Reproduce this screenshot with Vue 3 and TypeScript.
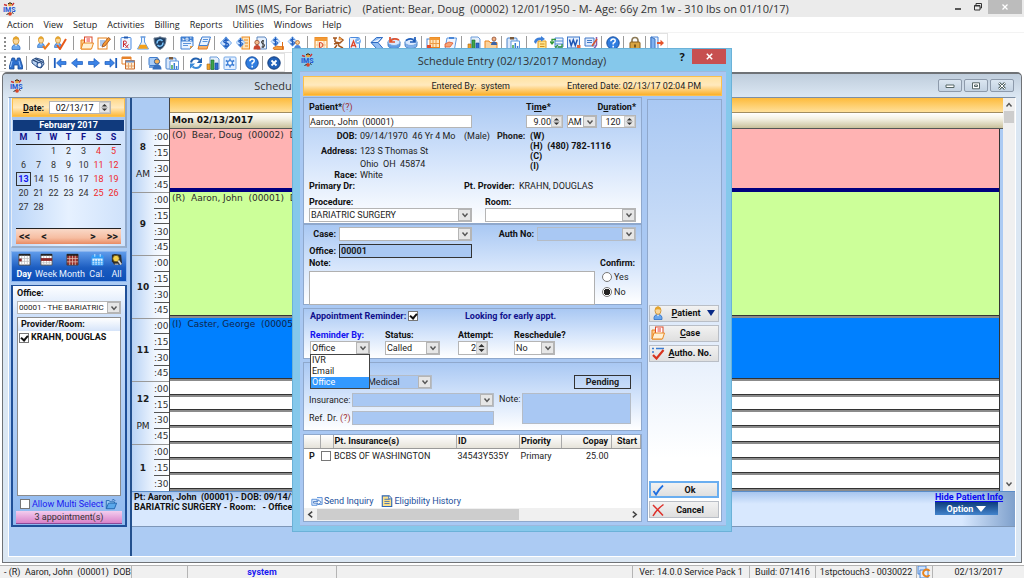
<script setup lang="ts">
import { ref } from 'vue'

type Tool = { icon: string; label: string } | { sep: 's' | 'm' | 'l' }

const t = (icon: string, label: string): Tool => ({ icon, label })
const s: Tool = { sep: 's' }
const m: Tool = { sep: 'm' }
const l: Tool = { sep: 'l' }

const menus = ['Action', 'View', 'Setup', 'Activities', 'Billing', 'Reports', 'Utilities', 'Windows', 'Help']

const mainTools: Tool[] = [
  t('person', 'Patient'), l,
  t('person-edit', 'Check in'), t('person-done', 'Check out'), l,
  t('folder', 'Chart'), t('note-edit', 'Visit note'), s,
  t('rx', 'Prescription'), t('flask', 'Lab'), t('shield', 'Immunization'), l,
  t('doc', 'Document'), t('layers', 'Forms'), s,
  t('dollar', 'Charges'), t('dollar-note', 'Payment'), t('dollar-person', 'Account'),
  t('dollar-hand', 'Collection'), t('dollar-user', 'Billing'), l,
  t('cal-d', 'Schedule'), t('runner', 'Follow up'), t('doc-a', 'Letter'), s,
  t('fold', 'Fax'), t('disc-red', 'Outbox'), t('disc-blue', 'Inbox'), s,
  t('cal-orange', 'Planner'), t('clip-red', 'Tasks'), m,
  t('chart', 'Analysis'), t('folder-user', 'Referral'), s,
  t('clip-chart', 'Report'), l,
  t('doc-swap', 'Exchange'), t('table-swap', 'Transfer'), t('word', 'Word'), t('sign', 'Sign'), s,
  t('help', 'Help'), s,
  t('lock', 'Lock'), s,
  t('exit', 'Exit'),
]

const viewTools: Tool[] = [
  t('binoculars', 'Find'), s,
  t('eye', 'Preview'), s,
  t('first', 'First'), t('prev', 'Previous'), t('next', 'Next'), t('last', 'Last'), t('tiles', 'Windows'), l,
  t('people', 'Patients'), t('clip-chart', 'Report'), m,
  t('refresh', 'Refresh'), t('chart', 'Statistics'), t('gear', 'Settings'), s,
  t('help', 'Help'), s,
  t('close', 'Close'),
]

const weekdays = ['M', 'T', 'W', 'T', 'F', 'S', 'S']
const weeks: (number | null)[][] = [
  [null, null, 1, 2, 3, 4, 5],
  [6, 7, 8, 9, 10, 11, 12],
  [13, 14, 15, 16, 17, 18, 19],
  [20, 21, 22, 23, 24, 25, 26],
  [27, 28, null, null, null, null, null],
]

const views = [
  { label: 'Day', icon: 'v-day' },
  { label: 'Week', icon: 'v-week' },
  { label: 'Month', icon: 'v-month' },
  { label: 'Cal.', icon: 'v-cal' },
  { label: 'All', icon: 'v-all' },
]

const hours = [
  { h: '8', half: 'AM', slots: [':00', ':15', ':30', ':45'] },
  { h: '9', half: '', slots: [':00', ':15', ':30', ':45'] },
  { h: '10', half: '', slots: [':00', ':15', ':30', ':45'] },
  { h: '11', half: '', slots: [':00', ':15', ':30', ':45'] },
  { h: '12', half: 'PM', slots: [':00', ':15', ':30', ':45'] },
  { h: '1', half: '', slots: [':00', ':15', ':30'] },
]

const appointments = [
  { text: '(O)  Bear, Doug  (00002)  DOB', kind: 'pink' },
  { text: '(R)  Aaron, John  (00001)  DOB', kind: 'green' },
  { text: '(I)  Caster, George  (00005)', kind: 'blue' },
]

const reminderOptions = ['IVR', 'Email', 'Office']

const date = ref('02/13/17')
const patient = ref('Aaron, John  (00001)')
const time = ref('9.00')
const duration = ref('120')
const office = ref('00001')
const attempt = ref('2')
const note = ref('')
const insNote = ref('')
const refDr = ref('')
const confirm = ref('No')
const reminder = ref(true)
const reminderBy = ref('Office')
const providerOn = ref(true)
const multi = ref(false)
const authReq = ref(false)
const insRow = ref(false)
</script>

<template>
  <div class="app">
    <svg class="defs" aria-hidden="true">
      <symbol id="i-logo" viewBox="0 0 14 14">
        <path d="M2 2.500l3 1M12 1l-2 2.500" stroke="#c33" stroke-width="1.400" />
        <circle cx="8" cy="2.400" r="1.900" fill="#e8a13a" /><path d="M6 1.800q2-2 4 0" stroke="#222" fill="none" />
        <text x="1" y="9.500" font-size="7" font-weight="700" font-family="Roboto, sans-serif" fill="#1d52d0">IMS</text>
        <circle cx="8" cy="11.800" r="1.900" fill="#d8452a" /><path d="M4.500 13l2-2M10 10.500l1.500 1" stroke="#222" />
      </symbol>
      <symbol id="i-person" viewBox="0 0 14 14">
        <path d="M3 13.500q-.5-5 4-5t4 5z" fill="#6aa7ec" stroke="#2f6fc4" stroke-width=".8" />
        <path d="M5.800 8.500l1.200 2 1.200-2z" fill="#fff" />
        <ellipse cx="7" cy="4.600" rx="3" ry="3.800" fill="#fbd79a" stroke="#c98a25" stroke-width=".8" />
        <path d="M4 4q.5-3.500 3-3.500T10 4Q7 2.500 4 4z" fill="#e5a52d" />
      </symbol>
      <symbol id="i-person-edit" viewBox="0 0 14 14">
        <use href="#i-person" x="-1" width="12" height="12" /><path d="M7 10l2 2.500 4.500-5.500" stroke="#f07a1a" stroke-width="2" fill="none" />
      </symbol>
      <symbol id="i-person-done" viewBox="0 0 14 14">
        <use href="#i-person" x="-1" width="12" height="12" /><path d="M4 9l3 4 6-10" stroke="#e85a1a" stroke-width="2" fill="none" />
      </symbol>
      <symbol id="i-folder" viewBox="0 0 14 14">
        <path d="M1 13V4h3l1 1.500h6V13z" fill="#fbc98a" stroke="#e8831c" /><rect x="4.500" y="1" width="7.500" height="7" fill="#fff" stroke="#d9482b" />
        <path d="M6.500 3h3.500M6.500 5h3.500" stroke="#e33" /><path d="M1 13l2-6h10.500l-2 6z" fill="#fff0d4" stroke="#ea8a22" />
      </symbol>
      <symbol id="i-note-edit" viewBox="0 0 14 14">
        <rect x="1" y="2" width="9" height="11" fill="#fff" stroke="#e8831c" /><path d="M3 5h5M3 7h4M3 9h3" stroke="#5b94dc" />
        <path d="M5 11l1-3 5.500-6.500 2 1.500L8 10z" fill="#f49a34" stroke="#96461a" stroke-width=".8" />
      </symbol>
      <symbol id="i-rx" viewBox="0 0 14 14">
        <rect x="2" y="1.500" width="10" height="12" rx="1" fill="#eef5ff" stroke="#4a8ae0" /><path d="M5 1.500h4" stroke="#235bb0" stroke-width="2" />
        <path d="M4.500 11V5h2.200q1.500 1.500 0 3H5l4.500 4M9.500 8.500l-3 3.500" stroke="#cc2d33" fill="none" />
      </symbol>
      <symbol id="i-flask" viewBox="0 0 14 14">
        <path d="M5.500 1.500V6L1.500 13h11L8.500 6V1.500" fill="#e8f2ff" stroke="#5d9ae4" /><path d="M4 8.800h6L12 12.700H2z" fill="#f5a21b" /><path d="M4.500 1h5" stroke="#4a86d4" stroke-width="1.300" />
      </symbol>
      <symbol id="i-shield" viewBox="0 0 14 14">
        <path d="M7 .8q3 1.500 6 1.200 0 9-6 11.500Q1 11 1 2q3 .3 6-1.200z" fill="#1f3e62" stroke="#6b7c90" />
        <path d="M4.200 7.500A3 3 0 0 1 9.500 5M9.800 6.500A3 3 0 0 1 4.500 9" stroke="#7cc7ff" stroke-width="1.400" fill="none" />
      </symbol>
      <symbol id="i-doc" viewBox="0 0 14 14">
        <path d="M1 1h12v9l-3 3H1z" fill="#eaf3ff" stroke="#3f7fd2" /><path d="M1 1h12v4.500H1z" fill="#3f7fd2" />
        <path d="M3 2v2.500M3 3.500h1.500M6 2.200h2v2H6zM10 2h1.500M10 4.500h1.500" stroke="#fff" stroke-width=".8" fill="none" /><path d="M3 7.500h8M3 9.500h5" stroke="#5b94dc" /><path d="M10 13v-3h3z" fill="#f0a03c" />
      </symbol>
      <symbol id="i-layers" viewBox="0 0 14 14">
        <path d="M4 3h9l-3 10H1z" fill="#f9b26a" stroke="#e37a22" /><path d="M5 1h8.500L10.500 9.500H2z" fill="#eaf3ff" stroke="#3f7fd2" /><path d="M6 3.500h5M5.500 5.500h5" stroke="#5b94dc" />
      </symbol>
      <symbol id="i-dollar" viewBox="0 0 14 14">
        <path d="M7 .8l5.500 6.200L7 13.200 1.500 7z" fill="#cfe4ff" stroke="#6fa8ea" />
        <path d="M9.500 4.600Q7 3 5.300 4.500T7 7q3.500.8 2 2.700T4.500 9.500M7 1.500v11" stroke="#1c5bbd" stroke-width="1.400" fill="none" />
      </symbol>
      <symbol id="i-dollar-note" viewBox="0 0 14 14">
        <rect x="6" y="1" width="7.500" height="12" fill="#fde3b8" stroke="#ec8a21" /><path d="M8 4h4M9 7h3M9 10h3" stroke="#ec8a21" /><use href="#i-dollar" x="-1" y="1" width="11" height="11" />
      </symbol>
      <symbol id="i-dollar-person" viewBox="0 0 14 14">
        <path d="M4 1h8l1.500 2v10H4z" fill="#e6f0fd" stroke="#5d86bd" /><path d="M11 5Q8.500 4 8.500 6t2 2 .3 3H8.500M10 4v8" stroke="#333" stroke-width="1" fill="none" />
        <circle cx="4" cy="6.500" r="2.200" fill="#f4b98a" stroke="#8a3b22" stroke-width=".7" /><path d="M.5 13.500q0-4.500 3.500-4.500t3.500 4.500z" fill="#c8452f" />
      </symbol>
      <symbol id="i-dollar-hand" viewBox="0 0 14 14">
        <use href="#i-dollar" x="0" y="0" width="11" height="11" /><path d="M3 12q4-3 6-1.500h4.500v3H4z" fill="#f6a13c" stroke="#db6b16" stroke-width=".8" /><path d="M12.500 6v7" stroke="#db6b16" />
      </symbol>
      <symbol id="i-dollar-user" viewBox="0 0 14 14">
        <use href="#i-dollar" x="0" y="0" width="11" height="11" /><circle cx="10.500" cy="6.500" r="2" fill="#f8cb90" stroke="#ab5b1c" stroke-width=".7" /><path d="M7 13.500q0-4.500 3.500-4.500t3.500 4.500z" fill="#4a89dc" />
      </symbol>
      <symbol id="i-cal-d" viewBox="0 0 14 14">
        <rect x="1" y="1.500" width="12" height="12" fill="#fff5e2" stroke="#e8831c" /><path d="M1 1.500h12V5H1z" fill="#f39a35" /><path d="M4 5v8M10 5v8M1 9h12" stroke="#f5c48a" /><path d="M5.500 6.500v5q3.500 0 3.500-2.500T5.500 6.500z" stroke="#d93a22" fill="none" />
      </symbol>
      <symbol id="i-runner" viewBox="0 0 14 14">
        <path d="M2 2h4M4 2v4M8 1l4 3-3 3-5-1M3 8l4-1 1 3 4 2M6 9l-3 4" stroke="#a4561d" stroke-width="1.500" fill="none" /><circle cx="9" cy="3" r="1.600" fill="#f2a04a" />
      </symbol>
      <symbol id="i-doc-a" viewBox="0 0 14 14">
        <rect x="1.500" y="1.500" width="10" height="12" rx="1" fill="#eaf3ff" stroke="#4b8ade" /><path d="M3 11.500l2.500-6.500L8 11.500M4 9.500h3" stroke="#e0452a" stroke-width="1.300" fill="none" /><circle cx="10" cy="5" r="3" fill="#7cb0ee" /><path d="M9 5l1 1 2-2.500" stroke="#fff" fill="none" />
      </symbol>
      <symbol id="i-fold" viewBox="0 0 14 14">
        <path d="M12.500 1.500H6.500L1 6.500l6 6.500h6.500L8 6.500z" fill="#8fbcf2" stroke="#2d6ac2" /><path d="M1 6.500h7l4.500-5" fill="#e3efff" stroke="#2d6ac2" />
      </symbol>
      <symbol id="i-disc-red" viewBox="0 0 14 14">
        <path d="M1 6v3q0 3.500 6 3.500T13 9V6z" fill="#5f9de6" stroke="#4a80c4" /><ellipse cx="7" cy="6" rx="6" ry="3.500" fill="#d9e9ff" stroke="#7aa9de" /><path d="M3 1v5h5M3.500 5.500Q6 1 12 4" stroke="#e2522d" stroke-width="1.700" fill="none" />
      </symbol>
      <symbol id="i-disc-blue" viewBox="0 0 14 14">
        <path d="M1 6v3q0 3.500 6 3.500T13 9V6z" fill="#7fb0ec" stroke="#4a80c4" /><ellipse cx="7" cy="6" rx="6" ry="3.500" fill="#d9e9ff" stroke="#7aa9de" /><path d="M11 1v5H6M10.500 5.500Q8 1 2 4.500" stroke="#1e5bb8" stroke-width="1.700" fill="none" />
      </symbol>
      <symbol id="i-cal-orange" viewBox="0 0 14 14">
        <rect x="1" y="3" width="9" height="9" fill="#fff" stroke="#4a86d6" /><rect x="4" y="1.500" width="9.500" height="10" fill="#ffe6bd" stroke="#e8831c" /><path d="M4 1.500h9.500V4H4z" fill="#f39a35" /><path d="M7 4v7M10 4v7M4 7.500h9" stroke="#eb9b45" /><path d="M1 9h4v4H1z" fill="#e34b2c" />
      </symbol>
      <symbol id="i-clip-red" viewBox="0 0 14 14">
        <path d="M4 2h9.500l-2 11H2z" fill="#eef5ff" stroke="#5e97de" /><path d="M6 1h5v2H6z" fill="#4a86d6" /><path d="M2 8l4-2 4 1-3 4H2z" fill="#f7a476" stroke="#e0562c" stroke-width=".8" />
      </symbol>
      <symbol id="i-chart" viewBox="0 0 14 14">
        <path d="M4 1h7l2 2v10H4z" fill="#e6f0fd" stroke="#6b9bd8" /><path d="M1 8h3v5.500H1z" fill="#f1a32b" stroke="#a66412" stroke-width=".6" /><path d="M5 4h3v9.500H5z" fill="#3da44a" stroke="#1d6a2a" stroke-width=".6" /><path d="M9 7h3v6.500H9z" fill="#2e6fd0" stroke="#164493" stroke-width=".6" />
      </symbol>
      <symbol id="i-folder-user" viewBox="0 0 14 14">
        <path d="M1 13V5h4l1 1.500h7V13z" fill="#fbd29b" stroke="#e8831c" /><circle cx="10" cy="3" r="2" fill="#f2b182" stroke="#7e3a20" stroke-width=".7" /><path d="M7 9q0-3.500 3-3.500T13 9z" fill="#3b64a8" />
      </symbol>
      <symbol id="i-clip-chart" viewBox="0 0 14 14">
        <rect x="1" y="2" width="10" height="11" rx="1" fill="#d9e8fc" stroke="#4b82c8" /><path d="M4 1h4v2.500H4z" fill="#7a5a3a" /><path d="M5 5h8.500v8.500H5z" fill="#fff" stroke="#5f97dd" /><path d="M9.300 13V7M11.600 13v-3" stroke="#3b7ed2" stroke-width="1.500" /><path d="M7 13v-4" stroke="#3da44a" stroke-width="1.500" />
      </symbol>
      <symbol id="i-doc-swap" viewBox="0 0 14 14">
        <path d="M5 5h8v8.500H5z" fill="#ffe58c" stroke="#e39a22" /><path d="M7 8h4.500M7 10.500h4.500" stroke="#d58c1e" /><path d="M1 6q1-5 7-4.500V0l4 3-4 2.500V4Q4 3.500 3 8z" fill="#3d7fd8" />
      </symbol>
      <symbol id="i-table-swap" viewBox="0 0 14 14">
        <path d="M5 2h8v9H5z" fill="#edf4ff" stroke="#4a86d6" /><path d="M5 5h8M5 8h8" stroke="#4a86d6" /><path d="M6 3.500H2V7M0 5.500L2 8l2-2.500M8 11h4V8M8 9l-2.500 2L8 13" stroke="#32983c" stroke-width="1.300" fill="none" />
      </symbol>
      <symbol id="i-word" viewBox="0 0 14 14">
        <rect x=".5" y="1" width="12" height="11" fill="#e5f0ff" stroke="#3f78c9" /><path d="M2.500 3.500l1.700 6L6.300 4l2 5.500 2-6" stroke="#1d55b4" stroke-width="1.500" fill="none" /><path d="M10 9h3.500v4H10z" fill="#e2653a" />
      </symbol>
      <symbol id="i-sign" viewBox="0 0 14 14">
        <path d="M1 2h9v8H1z" fill="#dceaff" stroke="#4379c6" /><path d="M3 4.500h5M3 6.500h5" stroke="#4379c6" /><path d="M12.500 1v8l-3 4.500H4" stroke="#8b5aa8" stroke-width="1.500" fill="none" /><path d="M8 10l5-7" stroke="#d8532e" stroke-width="1.500" />
      </symbol>
      <symbol id="i-help" viewBox="0 0 14 14">
        <circle cx="7" cy="7" r="6.200" fill="#2f7de0" stroke="#1b4f9e" /><path d="M4.800 5.300Q5 3 7.200 3t2 2.200Q9 6.500 7.200 7.200V8.500M7.200 9.800v1.600" stroke="#fff" stroke-width="1.500" fill="none" />
      </symbol>
      <symbol id="i-lock" viewBox="0 0 14 14">
        <path d="M4 7V4.500Q4 1.500 7 1.500t3 3V7" stroke="#8c7a56" stroke-width="1.600" fill="none" /><rect x="2" y="6" width="10" height="7.500" rx="1" fill="#d9a441" stroke="#8a5f1a" /><path d="M7 8.500v3" stroke="#5a3c0c" stroke-width="1.500" />
      </symbol>
      <symbol id="i-exit" viewBox="0 0 14 14">
        <path d="M1 1h7v12H1z" fill="#e6f0ff" stroke="#4b86d8" /><path d="M1 1l4 2v10.500L1 13z" fill="#7fb1f0" stroke="#3a72c0" /><path d="M7 7h4" stroke="#e5532a" stroke-width="2" /><path d="M10.500 3.800L14 7l-3.500 3.200z" fill="#e5532a" />
      </symbol>
      <symbol id="i-binoculars" viewBox="0 0 14 14">
        <path d="M3 2h2.500l1 3h1l1-3H11l2.500 8v3H9V9H5v4H.5v-3z" fill="#2d6fce" stroke="#174a96" stroke-width=".8" /><path d="M3 5l-1.500 6M10 5l1.500 6" stroke="#9cc6ff" />
      </symbol>
      <symbol id="i-eye" viewBox="0 0 14 14">
        <path d="M1 4l4-2 7 2 1 4-3 4-4-1-5-4z" fill="#b9d3f4" stroke="#2b4f86" /><path d="M2 4l8 4M4 2.500l8 4" stroke="#23406e" stroke-width="1.300" /><circle cx="8.500" cy="9" r="2.500" fill="#eef5ff" stroke="#30558f" stroke-width="1.200" />
      </symbol>
      <symbol id="i-prev" viewBox="0 0 14 14"><path d="M1.500 7L7 2.500v3h5.500v3H7v3z" fill="#3b83e6" stroke="#1d5dbd" stroke-width=".7" /></symbol>
      <symbol id="i-next" viewBox="0 0 14 14"><path d="M12.500 7L7 2.500v3H1.500v3H7v3z" fill="#3b83e6" stroke="#1d5dbd" stroke-width=".7" /></symbol>
      <symbol id="i-first" viewBox="0 0 14 14"><path d="M1.800 2v10" stroke="#1d5dbd" stroke-width="1.800" /><path d="M3.500 7L8 2.800v2.700h5v3H8v2.700z" fill="#3b83e6" stroke="#1d5dbd" stroke-width=".7" /></symbol>
      <symbol id="i-last" viewBox="0 0 14 14"><path d="M12.200 2v10" stroke="#1d5dbd" stroke-width="1.800" /><path d="M10.500 7L6 2.800v2.700H1v3h5v2.700z" fill="#3b83e6" stroke="#1d5dbd" stroke-width=".7" /></symbol>
      <symbol id="i-tiles" viewBox="0 0 14 14">
        <path d="M1 1h9v7H1z" fill="#fff" stroke="#e68128" /><path d="M1 2h9" stroke="#e68128" stroke-width="2" /><path d="M4.500 4.500h9v8.500h-9z" fill="#fde9cf" stroke="#c96a2a" /><path d="M4.500 5.500h9" stroke="#6d8fbf" stroke-width="2" /><path d="M7.500 7v6M10.500 7v6M5 10h8" stroke="#e8a46b" />
      </symbol>
      <symbol id="i-people" viewBox="0 0 14 14">
        <rect x="1" y="1.500" width="9" height="8" rx="1" fill="#a9cdf8" stroke="#3f7ccc" /><circle cx="9" cy="5.500" r="2.600" fill="#f3b25a" stroke="#2e5c9c" /><path d="M4.500 13.500q0-5 4.500-5t4.500 5z" fill="#3670bf" /><path d="M1 11h4" stroke="#3f7ccc" stroke-width="1.500" />
      </symbol>
      <symbol id="i-refresh" viewBox="0 0 14 14">
        <path d="M2 6.500Q3 2.500 7 2.500q2 0 3.500 1.500" stroke="#1f5fae" stroke-width="2.200" fill="none" /><path d="M13 1.500V7H7.800z" fill="#1f5fae" /><path d="M12 8q-1 4-5 4-2 0-3.500-1.500" stroke="#3a8ad8" stroke-width="2.200" fill="none" /><path d="M1 12.800V7.500h5.200z" fill="#3a8ad8" />
      </symbol>
      <symbol id="i-gear" viewBox="0 0 14 14">
        <rect x="1" y="1" width="12" height="12.500" rx="1" fill="#e3efff" stroke="#77a9e6" /><path d="M7 2.500v9M2.800 4.500l8.400 5M2.800 9.500l8.400-5" stroke="#3c7ed6" stroke-width="1.500" /><circle cx="7" cy="7" r="2.400" fill="#fff" stroke="#3c7ed6" stroke-width="1.200" />
      </symbol>
      <symbol id="i-close" viewBox="0 0 14 14">
        <circle cx="7" cy="7" r="6.200" fill="#2060b8" stroke="#143c78" /><path d="M4.500 4.500l5 5M9.500 4.500l-5 5" stroke="#fff" stroke-width="1.800" />
      </symbol>
      <symbol id="i-v-day" viewBox="0 0 14 14">
        <path d="M1 1.500h12v11.500H1z" fill="#fff" stroke="#444" /><path d="M1 2h12" stroke="#222" stroke-width="2" /><path d="M4 3v10M7 3v10M10 3v10M1 6h12M1 9h12" stroke="#bbb" stroke-width=".8" /><path d="M1 6h3v3H1z" fill="#8a2525" />
      </symbol>
      <symbol id="i-v-week" viewBox="0 0 14 14">
        <path d="M1 1.500h12v11.500H1z" fill="#fff" stroke="#555" /><path d="M1 2h12" stroke="#222" stroke-width="2" /><path d="M4 3v10M7 3v10M10 3v10M1 10.500h12" stroke="#bbb" stroke-width=".8" /><path d="M1 5.500h12v3H1z" fill="#8a2525" />
      </symbol>
      <symbol id="i-v-month" viewBox="0 0 14 14">
        <path d="M1 1.500h12v11.500H1z" fill="#9a2f2a" stroke="#444" /><path d="M1 2h12" stroke="#222" stroke-width="2" /><path d="M4 3v10M7 3v10M10 3v10M1 6h12M1 9.500h12" stroke="#e2c0b4" stroke-width=".8" />
      </symbol>
      <symbol id="i-v-cal" viewBox="0 0 14 14">
        <path d="M1 3h12v10H1z" fill="#e6f3ff" stroke="#2e9bf5" /><path d="M1 4.500h12" stroke="#2e9bf5" stroke-width="3" /><path d="M4 1v3M10 1v3" stroke="#9cd2ff" stroke-width="1.500" /><path d="M4 7v6M7 7v6M10 7v6M1 9h12M1 11h12" stroke="#2e9bf5" stroke-width=".8" />
      </symbol>
      <symbol id="i-v-all" viewBox="0 0 14 14">
        <path d="M2 2l3-1 7 1 1 10-8 1-3-4z" fill="#2b2b2b" /><circle cx="6.500" cy="6" r="3.500" fill="#f1cf4c" stroke="#5c4a12" stroke-width=".8" /><path d="M9 8l3 4.500" stroke="#d9d9d9" stroke-width="2" /><path d="M5 12h4" stroke="#e8e8e8" />
      </symbol>
      <symbol id="i-autho" viewBox="0 0 14 14">
        <path d="M1 2.500h2M5 2.500h8M1 6h2" stroke="#3b7ed2" stroke-width="1.500" /><path d="M2 9l3.500 3.500L12.500 4" stroke="#d8341f" stroke-width="2.200" fill="none" />
      </symbol>
      <symbol id="i-ok" viewBox="0 0 14 14"><path d="M2.500 8L5 11.500Q8 6 12 2.500" stroke="#1f6fe0" stroke-width="1.800" fill="none" /></symbol>
      <symbol id="i-cancel" viewBox="0 0 14 14"><path d="M2 2q4 4 10 10.500M12.500 1.500Q6 6 2 13" stroke="#dd2f2a" stroke-width="1.500" fill="none" /></symbol>
      <symbol id="i-send" viewBox="0 0 14 14">
        <path d="M1 5h6v7H1zM7 3h6v8H9" fill="#e6f0ff" stroke="#4a86d6" /><path d="M3 7.500h5V5.500l4 3-4 3v-2H3z" fill="#fff" stroke="#3a72c0" />
      </symbol>
      <symbol id="i-history" viewBox="0 0 14 14">
        <path d="M1.500 1h8l3 3v9.500h-11z" fill="#ffe289" stroke="#2f66b5" stroke-width="1.300" /><path d="M4 5h6M4 7.500h6M4 10h6" stroke="#2f66b5" /><path d="M9 1v3.500h3.500" fill="#fff" stroke="#2f66b5" />
      </symbol>
      <symbol id="i-open" viewBox="0 0 14 14">
        <path d="M1.500 12.500V3h3.500l1 1.500h5V6" fill="#9fd0f8" stroke="#1a5fa8" /><path d="M1.500 12.500l2.500-6.500h9.500L11 12.500z" fill="#5aa7ea" stroke="#1a5fa8" /><path d="M8 2.500q3-2 4 1" stroke="#1a5fa8" fill="none" />
      </symbol>
      <symbol id="i-sync" viewBox="0 0 14 14">
        <path d="M1 1h8v8H1z" fill="#cfe2fb" stroke="#4a86d6" /><path d="M3 5h8v8H3z" fill="#e4efff" stroke="#4a86d6" /><path d="M12.500 6a3.500 3.500 0 1 0 0 4" stroke="#e8831c" stroke-width="2" fill="none" />
      </symbol>
      <symbol id="i-chev" viewBox="0 0 8 8"><path d="M1.500 2.500L4 5.500l2.500-3" stroke="#555" stroke-width="1.400" fill="none" /></symbol>
      <symbol id="i-spin" viewBox="0 0 8 10"><path d="M1 4l3-3 3 3zM1 6l3 3 3-3z" fill="#333" /><path d="M0 5h8" stroke="#aaa" stroke-width=".6" /></symbol>
    </svg>

    <header class="titlebar">
      <svg class="ic logo"><use href="#i-logo" /></svg>
      <h1>IMS (IMS, For Bariatric)&nbsp;&nbsp;&nbsp; (Patient: Bear, Doug&nbsp; (00002) 12/01/1950 - M- Age: 66y 2m 1w - 310 lbs on 01/10/17)</h1>
      <div class="winbtns">
        <button aria-label="Minimize"><svg viewBox="0 0 10 10"><path d="M2 7h6" stroke="#333" stroke-width="1.600" /></svg></button>
        <button aria-label="Restore"><svg viewBox="0 0 10 10"><path d="M1.500 3.500h5.500V8H1.500zM3 3.500v-2h5.500V6H7M1.500 4h5.500" stroke="#333" fill="none" /></svg></button>
        <button class="x" aria-label="Close"><svg viewBox="0 0 10 10"><path d="M2.500 2.500l5 5M7.500 2.500l-5 5" stroke="#fff" stroke-width="1.300" /></svg></button>
      </div>
    </header>

    <nav class="menubar">
      <button v-for="item in menus" :key="item">{{ item }}</button>
    </nav>

    <div class="toolrow">
      <div class="toolbar">
        <span class="grip"></span>
        <template v-for="(tool, i) in mainTools" :key="i">
          <button v-if="'icon' in tool" class="tool" :aria-label="tool.label"><svg class="ic"><use :href="'#i-' + tool.icon" /></svg></button>
          <span v-else class="sep" :class="tool.sep"></span>
        </template>
      </div>
    </div>
    <div class="toolrow second">
      <div class="toolbar">
        <span class="grip"></span>
        <template v-for="(tool, i) in viewTools" :key="i">
          <button v-if="'icon' in tool" class="tool" :aria-label="tool.label"><svg class="ic"><use :href="'#i-' + tool.icon" /></svg></button>
          <span v-else class="sep" :class="tool.sep"></span>
        </template>
      </div>
    </div>

    <main class="mdi">
      <div class="childtitle">
        <svg class="ic"><use href="#i-logo" /></svg>
        <h2>Schedule</h2>
        <div class="childbtns">
          <button aria-label="Minimize"><svg viewBox="0 0 12 8"><path d="M2 3h8v2.500H2z" fill="#fff" stroke="#566" /></svg></button>
          <button aria-label="Maximize"><svg viewBox="0 0 12 8"><path d="M2.500.8h7v6h-7zM4.500 3h3v1.500h-3z" fill="#fff" stroke="#566" /></svg></button>
          <button aria-label="Close"><svg viewBox="0 0 12 8"><path d="M3 1l6 6M9 1L3 7" stroke="#566" stroke-width="2.600" /><path d="M3 1l6 6M9 1L3 7" stroke="#fff" /></svg></button>
        </div>
      </div>

      <div class="workspace">
        <aside class="side">
          <div class="calbox">
            <div class="datebar">
              <label for="date"><u>D</u>ate:</label>
              <span class="spin"><input id="date" v-model="date" type="text" /><svg class="spinner"><use href="#i-spin" /></svg></span>
            </div>
            <div class="cal">
              <div class="month">February 2017</div>
              <table>
                <thead><tr><th v-for="(d, i) in weekdays" :key="i">{{ d }}</th></tr></thead>
                <tbody>
                  <tr v-for="(w, i) in weeks" :key="i">
                    <td v-for="(d, j) in w" :key="j" :class="{ we: j > 4, today: d === 13 }">{{ d ?? '' }}</td>
                  </tr>
                </tbody>
              </table>
              <div class="calnav">
                <button>&lt;&lt;</button><button>&lt;</button><span></span><button>&gt;</button><button>&gt;&gt;</button>
              </div>
            </div>
          </div>

          <div class="views">
            <button v-for="(v, i) in views" :key="v.label" :class="{ on: i === 0 }">
              <svg class="ic"><use :href="'#i-' + v.icon" /></svg>{{ v.label }}
            </button>
          </div>

          <div class="office">
            <label class="b" for="off">Office:</label>
            <span class="sel"><select id="off"><option>00001 - THE BARIATRIC</option></select><i><svg><use href="#i-chev" /></svg></i></span>
            <div class="provlist">
              <div class="provhead">Provider/Room:</div>
              <label class="prov"><input v-model="providerOn" type="checkbox" />KRAHN, DOUGLAS</label>
            </div>
            <label class="multi"><input v-model="multi" type="checkbox" />Allow Multi Select<svg class="ic"><use href="#i-open" /></svg></label>
            <div class="count">3 appointment(s)</div>
          </div>
        </aside>

        <section class="sched">
          <div class="schedmain">
            <div class="timecol">
              <div class="corner"></div>
              <div v-for="h in hours" :key="h.h" class="hour" :style="{ flexGrow: h.slots.length }">
                <div class="hnum"><b>{{ h.h }}</b><b v-if="h.half" class="half">{{ h.half }}</b></div>
                <div class="slots"><span v-for="q in h.slots" :key="q">{{ q }}</span></div>
              </div>
            </div>
            <div class="daycol">
              <div class="dayorange"></div>
              <div class="dayhead">Mon 02/13/2017</div>
              <div class="grid">
                <div v-for="a in appointments" :key="a.kind" class="appt" :class="a.kind">{{ a.text }}</div>
                <div v-for="n in 7" :key="n" class="free"></div>
              </div>
            </div>
            <div class="vscroll">
              <svg viewBox="0 0 8 8"><path d="M1.500 5.500L4 2.500l2.500 3" stroke="#555" stroke-width="1.400" fill="none" /></svg>
              <span class="thumb"></span>
              <svg><use href="#i-chev" /></svg>
            </div>
          </div>
          <div class="info">
            <p>Pt: Aaron, John&nbsp; (00001) - DOB: 09/14/1970<br />BARIATRIC SURGERY - Room:&nbsp;&nbsp; - Office</p>
            <div class="infor">
              <a href="#">Hide Patient Info</a>
              <button>Option<svg viewBox="0 0 10 6"><path d="M0 0h10L5 6z" fill="#fff" /></svg></button>
            </div>
          </div>
        </section>
      </div>
    </main>

    <footer class="status">
      <span class="s1">- (R)&nbsp; Aaron, John&nbsp; (00001)&nbsp; DOB</span>
      <span class="s2"></span>
      <span class="s3">system</span>
      <span class="s4"></span>
      <span class="s5">Ver: 14.0.0 Service Pack 1</span>
      <span class="s6">Build: 071416</span>
      <span class="s7">1stpctouch3 - 0030022</span>
      <span class="s8"><svg class="ic"><use href="#i-sync" /></svg></span>
      <span class="s9">02/13/2017</span>
    </footer>

    <div class="dialog" role="dialog" aria-labelledby="dlgtitle">
      <div class="dlgtitle">
        <svg class="ic"><use href="#i-logo" /></svg>
        <h2 id="dlgtitle">Schedule Entry (02/13/2017 Monday)</h2>
        <button class="q">?</button>
        <button class="dx" aria-label="Close"><svg viewBox="0 0 10 10"><path d="M2 2l6 6M8 2L2 8" stroke="#fff" stroke-width="1.700" /></svg></button>
      </div>
      <div class="dlgbody">
        <div class="entered"><span>Entered By:&nbsp; system</span><span>Entered Date: 02/13/17 02:04 PM</span></div>
        <div class="cols">
          <form class="form" @submit.prevent>
            <section class="box patient">
              <div class="two">
                <div class="field grow">
                  <label class="b" for="pt">Patient*<span class="hint">(?)</span></label>
                  <input id="pt" v-model="patient" type="text" />
                </div>
                <div class="times">
                  <div class="field tm"><label class="b" for="tm">Ti<u>m</u>e*</label>
                    <span class="spin"><input id="tm" v-model="time" class="r" type="text" /><svg class="spinner"><use href="#i-spin" /></svg></span></div>
                  <div class="field ap"><span class="sel"><select aria-label="AM or PM"><option>AM</option></select><i><svg><use href="#i-chev" /></svg></i></span></div>
                  <div class="field du"><label class="b" for="du">D<u>u</u>ration*</label>
                    <span class="spin"><input id="du" v-model="duration" class="c" type="text" /><svg class="spinner"><use href="#i-spin" /></svg></span></div>
                </div>
              </div>
              <div class="details">
                <dl>
                  <dt>DOB:</dt><dd>09/14/1970&nbsp; 46 Yr 4 Mo</dd>
                  <dt>Address:</dt><dd>123 S Thomas St</dd>
                  <dt></dt><dd class="city">Ohio&nbsp; OH&nbsp; 45874</dd>
                  <dt>Race:</dt><dd>White</dd>
                </dl>
                <span class="sex">(Male)</span>
                <b class="ph">Phone:</b>
                <ul class="phones"><li>(W)</li><li>(H)&nbsp; (480) 782-1116</li><li>(C)</li><li>(I)</li></ul>
              </div>
              <div class="drs"><b>Primary Dr:</b><span><b>Pt. Provider:</b>&nbsp; KRAHN, DOUGLAS</span></div>
              <div class="two">
                <div class="field"><label class="b" for="proc">Procedure:</label>
                  <span class="sel"><select id="proc"><option>BARIATRIC SURGERY</option></select><i><svg><use href="#i-chev" /></svg></i></span></div>
                <div class="field"><label class="b" for="room">Room:</label>
                  <span class="sel"><select id="room"><option></option></select><i><svg><use href="#i-chev" /></svg></i></span></div>
              </div>
            </section>

            <section class="box case">
              <div class="caserow">
                <label class="b" for="case">Case:</label>
                <span class="sel"><select id="case"><option></option></select><i><svg><use href="#i-chev" /></svg></i></span>
                <label class="b auth" for="auth">Auth No:</label>
                <span class="sel off"><select id="auth"><option></option></select><i><svg><use href="#i-chev" /></svg></i></span>
                <label class="b" for="office">Office:</label>
                <input id="office" v-model="office" class="officein" type="text" />
              </div>
              <div class="noterow">
                <div class="field"><label class="b" for="note">Note:</label><textarea id="note" v-model="note"></textarea></div>
                <fieldset class="confirm">
                  <legend>Confirm:</legend>
                  <label><input v-model="confirm" type="radio" name="confirm" value="Yes" />Yes</label>
                  <label><input v-model="confirm" type="radio" name="confirm" value="No" />No</label>
                </fieldset>
              </div>
            </section>

            <section class="box remind">
              <div class="remtop"><label>Appointment Reminder:<input v-model="reminder" type="checkbox" /></label><span>Looking for early appt.</span></div>
              <div class="remrow">
                <div class="field by"><label class="b link" for="by">Reminder By:</label>
                  <span class="sel"><select id="by" v-model="reminderBy"><option v-for="o in reminderOptions" :key="o">{{ o }}</option></select><i><svg><use href="#i-chev" /></svg></i></span>
                  <ul class="pop"><li v-for="o in reminderOptions" :key="o" :class="{ on: o === reminderBy }">{{ o }}</li></ul></div>
                <div class="field st"><label class="b" for="st">Status:</label>
                  <span class="sel"><select id="st"><option>Called</option></select><i><svg><use href="#i-chev" /></svg></i></span></div>
                <div class="field at"><label class="b" for="at">Attempt:</label>
                  <span class="spin"><input id="at" v-model="attempt" class="r" type="text" /><svg class="spinner"><use href="#i-spin" /></svg></span></div>
                <div class="field re"><label class="b" for="re">Reschedule?</label>
                  <span class="sel"><select id="re"><option>No</option></select><i><svg><use href="#i-chev" /></svg></i></span></div>
              </div>
            </section>

            <section class="box ins">
              <div class="insleft">
                <span class="req"><input v-model="authReq" type="checkbox" aria-label="Authorization required" /></span>
                <span class="sel off med"><select aria-label="Type"><option>Medical</option></select><i><svg><use href="#i-chev" /></svg></i></span>
                <label for="insu">Insurance:</label>
                <span class="sel off"><select id="insu"><option></option></select><i><svg><use href="#i-chev" /></svg></i></span>
                <label for="rd">Ref. Dr. <span class="hint">(?)</span></label>
                <input id="rd" v-model="refDr" class="dis" type="text" />
              </div>
              <div class="insright">
                <output class="pending">Pending</output>
                <label for="inote">Note:</label><textarea id="inote" v-model="insNote" class="dis"></textarea>
              </div>
            </section>

            <section class="box tablebox">
              <table>
                <colgroup><col class="c1" /><col class="c2" /><col /><col class="c4" /><col class="c5" /><col class="c6" /><col class="c7" /></colgroup>
                <thead><tr><th></th><th></th><th>Pt. Insurance(s)</th><th>ID</th><th>Priority</th><th class="r">Copay</th><th class="r">Start</th></tr></thead>
                <tbody><tr><td class="p">P</td><td><input v-model="insRow" type="checkbox" aria-label="Select insurance" /></td><td>BCBS OF WASHINGTON</td><td>34543Y535Y</td><td>Primary</td><td class="r">25.00</td><td></td></tr></tbody>
              </table>
              <div class="links">
                <a href="#"><svg class="ic"><use href="#i-send" /></svg>Send Inquiry</a>
                <a href="#"><svg class="ic"><use href="#i-history" /></svg>Eligibility History</a>
              </div>
              <div class="hscroll">
                <svg viewBox="0 0 8 8"><path d="M5.500 1.500L2.500 4l3 2.500" stroke="#444" stroke-width="1.400" fill="none" /></svg>
                <span class="track"><span></span></span>
                <svg viewBox="0 0 8 8"><path d="M2.500 1.500l3 2.500-3 2.500" stroke="#444" stroke-width="1.400" fill="none" /></svg>
              </div>
            </section>
          </form>

          <div class="actions">
            <span class="sp1"></span>
            <button><svg class="ic"><use href="#i-person" /></svg><span><u>P</u>atient</span><svg class="dd" viewBox="0 0 8 6"><path d="M0 0h8L4 6z" fill="#0a2a86" /></svg></button>
            <button><svg class="ic"><use href="#i-folder" /></svg><span><u>C</u>ase</span></button>
            <button><svg class="ic"><use href="#i-autho" /></svg><span><u>A</u>utho. No.</span></button>
            <span class="sp2"></span>
            <button class="ok"><svg class="ic"><use href="#i-ok" /></svg><span>Ok</span></button>
            <button><svg class="ic"><use href="#i-cancel" /></svg><span>Cancel</span></button>
          </div>
        </div>
      </div>
    </div>
  </div>
</template>

<style>
html, body { margin: 0; }
</style>

<style scoped>
.app, .app * { box-sizing: border-box; }
.app {
  position: relative;
  display: flex;
  flex-direction: column;
  min-height: 100vh;
  background: #fff;
  color: #1c1c1c;
  font: 9px/12px Roboto, sans-serif;
  overflow: hidden;
}
.defs { position: absolute; width: 0; height: 0; }
h1, h2, p, ul, dl, dd { margin: 0; padding: 0; }
button, input, select, textarea { font: inherit; color: inherit; margin: 0; padding: 0; border: 0; background: none; border-radius: 0; outline: 0; min-width: 0; }
button { cursor: pointer; white-space: nowrap; }
ul { list-style: none; }
.ic { width: 14px; height: 14px; flex: none; display: block; }

/* application frame */
.titlebar { height: 17px; background: #ebebeb; display: flex; align-items: center; }
.titlebar .logo { margin-left: 2px; }
.titlebar h1 { flex: 1; text-align: center; font: 400 11px/17px "Open Sans", sans-serif; color: #333; white-space: nowrap; padding-left: 60px; }
.winbtns { display: flex; align-self: flex-start; height: 14px; margin-right: 2px; }
.winbtns button { width: 20px; display: flex; align-items: center; justify-content: center; }
.winbtns svg { width: 10px; height: 10px; }
.winbtns .x { width: 34px; background: #bcbcbc; }
.menubar { height: 16px; display: flex; gap: 10px; padding-left: 7px; align-items: center; border-bottom: 1px solid #f3f3f3; }
.menubar button { font: 9px/14px "Open Sans", sans-serif; color: #222; }
.toolrow { height: 20px; display: flex; }
.toolrow.second { height: 19px; }
.toolbar { display: flex; align-items: center; border: 1px solid #e2e2e2; border-left: 0; padding-right: 2px; }
.grip { width: 2px; height: 13px; margin: 0 1px 0 4px; background: repeating-linear-gradient(#8a8a8a 0 2px, #fff 2px 4px); }
.tool { width: 17px; height: 16px; display: flex; align-items: center; justify-content: center; }
.sep { height: 14px; display: flex; justify-content: center; }
.sep::before { content: ""; width: 1px; background: #9a9a9a; }
.sep.s { width: 5px; } .sep.m { width: 7px; } .sep.l { width: 10px; }

/* schedule window */
.mdi { flex: 1; margin: 0 2px 2px; border: 1px solid #6f7276; border-top-width: 2px; border-radius: 5px 5px 0 0; background: #dbe7f3; display: flex; flex-direction: column; padding: 0 5px 5px; }
.childtitle { height: 23px; margin: 0 -5px; padding: 0 7px 0 6px; display: flex; align-items: center; background: linear-gradient(#bfcddc, #dbe7f3); border-radius: 4px 4px 0 0; }
.childtitle h2 { flex: 1; padding-left: 23%; font: 400 11px/20px "Open Sans", sans-serif; color: #333; }
.childbtns { display: flex; gap: 2px; }
.childbtns button { width: 24px; height: 13px; border: 1px solid #8d9aab; border-radius: 2px; background: linear-gradient(#dbe6f1, #c3d2e2); display: flex; align-items: center; justify-content: center; }
.childbtns svg { width: 12px; height: 8px; }
.workspace { flex: 1; display: flex; background: #accbf3; border: 1px solid #fff; border-top-color: #7d8fa5; }
.side { width: 123px; flex: none; padding: 0 3px 29px 2px; display: flex; flex-direction: column; gap: 3px; border-right: 2px solid #23508e; }
.calbox { border: 1px solid #e8eef6; border-top: 0; border-bottom: 2px solid #9ab0cc; border-right: 2px solid #8fa9cc; background: #a9c6ee; }
.datebar { height: 19px; border: 1px solid #fbc04e; background: linear-gradient(#ffd98b, #ffe9bd 50%, #fdb93a); display: flex; align-items: center; gap: 5px; padding-left: 10px; font: 700 9px/12px Roboto, sans-serif; color: #111; }
.datebar .spin { width: 62px; height: 13px; font-weight: 400; }
.cal { margin-top: 3px; padding: 0 1px 2px; background: linear-gradient(90deg, #bcd6f8, #e6f1ff 50%, #cfe2fb); }
.month { height: 11px; background: #103a7d; color: #fff; text-align: center; font: 700 9px/11px Roboto, sans-serif; }
.cal table { margin: 0 3px; width: calc(100% - 6px); border-collapse: collapse; table-layout: fixed; border-bottom: 1px solid #222; }
.cal th { height: 13px; padding: 0; font: 700 9px/12px Roboto, sans-serif; color: #10108c; border-bottom: 1px solid #222; }
.cal td { height: 14px; padding: 0; text-align: center; font: 9px/12px Roboto, sans-serif; color: #333; }
.cal td.we { color: #f02a2a; }
.cal td.today { color: #1414f0; font-weight: 700; outline: 1px solid #333; outline-offset: -1px; }
.cal tbody::after { content: ""; display: block; height: 14px; }
.calnav { height: 15px; margin: 0 3px; background: linear-gradient(#f9d9c8, #f6bda1 60%, #e88b63); display: flex; align-items: center; padding: 0 3px; gap: 11px; font: 700 11px/12px Roboto, sans-serif; }
.calnav span { flex: 1; }
.views { height: 31px; background: linear-gradient(#5f9bea, #1b5cc0 55%, #0d4fb8); border: 1px solid #8ab4ee; display: grid; grid-template-columns: 22px 22px 30px 20px 1fr; align-items: center; padding: 0 0 0 1px; }
.views button { display: flex; flex-direction: column; align-items: center; color: #eaf3ff; font: 9px/12px Roboto, sans-serif; gap: 2px; }
.views .ic { width: 13px; height: 13px; }
.views .on { font-weight: 700; color: #fff; }
.office { flex: 1; border: 2px solid #1f4f98; border-top-width: 1px; background: linear-gradient(#fdfeff, #cfe1fa 12%, #8fb9ef); display: flex; flex-direction: column; padding: 2px 2px 1px; }
.office > .b { padding-left: 2px; }
.office .sel { margin: 2px 2px 3px; height: 13px; font-size: 8px; }
.provlist { flex: 1; margin: 0 2px; background: #fff; border: 1px solid #8c8c8c; font: 700 9px/13px Roboto, sans-serif; color: #111; }
.provhead { background: linear-gradient(#fff, #d6e4f9); padding-left: 3px; height: 13px; }
.prov { display: flex; align-items: center; gap: 2px; padding-left: 1px; white-space: nowrap; }
.multi { display: flex; align-items: center; gap: 2px; color: #1a1af0; height: 15px; padding-left: 5px; white-space: nowrap; }
.multi .ic { width: 12px; height: 12px; }
.count { height: 13px; background: linear-gradient(#f3cdee, #d982c9); border-bottom: 1px solid #8a4a9a; text-align: center; color: #333; margin: 0 1px; }

.sched { flex: 1; min-width: 0; display: flex; flex-direction: column; padding-bottom: 29px; }
.schedmain { flex: 1; display: flex; min-height: 0; }
.timecol { width: 38px; border-right: 1px solid #444; display: flex; flex-direction: column; font: 9px/12px "DejaVu Sans", sans-serif; }
.corner { height: 31px; flex: none; }
.hour { flex: 1 1 0; display: flex; background: linear-gradient(90deg, #b9d3f5, #eef5fe 60%, #fff); border-top: 1px solid #999; }
.hnum { width: 22px; display: flex; flex-direction: column; align-items: center; justify-content: center; gap: 15px; font-size: 9px; }
.half { font-weight: 400; color: #222; }
.slots { flex: 1; display: flex; flex-direction: column; }
.slots span { flex: 1; border-top: 1px solid #555; display: flex; align-items: center; color: #333; }
.slots span:first-child { border-top: 0; }
.daycol { flex: 1; display: flex; flex-direction: column; }
.dayorange { height: 15px; background: linear-gradient(#fdbb3c, #ffe09a); border-bottom: 1px solid #a08c60; }
.dayhead { height: 16px; background: linear-gradient(#fff, #f3f0e2 40%, #c9c19c); border-bottom: 1px solid #555; font: 700 9px/14px "DejaVu Sans", sans-serif; padding-left: 2px; color: #111; }
.grid { flex: 1; display: grid; grid-template-rows: 4fr 8fr 4fr repeat(7, 1fr); margin-right: 3px; border-right: 1px solid #333; background: #8b8b8b; }
.grid div { min-height: 0; background: #fff; border-bottom: 1px solid #333; margin-bottom: 2px; padding-left: 2px; white-space: pre; font: 9px/12px "DejaVu Sans", sans-serif; color: #2b2b2b; }
.grid .pink { background: #ffb3b3; border-bottom: 4px solid #000080; margin-bottom: 0; }
.grid .green { background: #ccff99; }
.grid .blue { background: #0080ff; color: #10254a; }
.vscroll { width: 12px; background: #f0f0f0; display: flex; flex-direction: column; align-items: center; padding: 3px 0; }
.vscroll svg { width: 8px; height: 8px; }
.vscroll .thumb { width: 10px; height: 12px; background: #cdcdcd; margin: 2px 0 auto; }
.info { height: 36px; border-top: 1px solid #5a8cc8; border-bottom: 1px solid #7e97b8; background: linear-gradient(90deg, transparent 94%, #7ea0cc), linear-gradient(#a7c5ee, #d8e8fe 35%); display: flex; justify-content: space-between; }
.info p { font: 700 9px/10px Roboto, sans-serif; color: #111; padding-left: 2px; white-space: nowrap; }
.infor { width: 80px; display: flex; flex-direction: column; font: 700 9px/10px Roboto, sans-serif; white-space: nowrap; }
.infor a { color: #0a0af0; }
.infor button { width: 63px; height: 13px; background: linear-gradient(#0d3c7c, #4384cc); color: #fff; display: flex; align-items: center; justify-content: center; gap: 3px; }
.infor svg { width: 10px; height: 6px; }

.status { height: 13px; background: #f0f0f0; border-top: 1px solid #b4b4b4; display: flex; font: 9px/12px Roboto, sans-serif; color: #222; white-space: nowrap; }
.status span { border-right: 1px solid #b4b4b4; overflow: hidden; text-align: center; flex: none; }
.status .s1 { padding: 0 1px 0 4px; width: 132px; text-align: left; } .s2 { width: 56px; } .status .s3 { width: 149px; color: #1a1af0; font-weight: 700; } .status .s4 { flex: 1; }
.s5 { width: 117px; } .s6 { width: 66px; } .s7 { width: 101px; } .s8 { width: 16px; display: flex; align-items: center; } .status .s9 { width: 91px; border-right: 0; }

/* shared controls */
.b { font: 700 9px/11px Roboto, sans-serif; color: #111; white-space: nowrap; }
.hint { color: #a03030; font-weight: 400; }
.sel, .spin { display: flex; background: #fff; border: 1px solid #b5b5b5; height: 14px; }
.sel select { flex: 1; appearance: none; padding-left: 1px; overflow: hidden; }
.sel i { width: 13px; flex: none; border: 1px solid #b5b5b5; background: #e6e6e6; display: flex; align-items: center; justify-content: center; }
.sel i svg { width: 8px; height: 8px; }
.sel.off, .dis { background: #a9c8f3; border: 1px solid #b5bcc6; }
.spin input { flex: 1; width: 0; text-align: center; }
.spin .r { text-align: right; }
.spinner { width: 11px; height: 100%; background: #e6e6e6; border: 1px solid #ccc; flex: none; }
input[type="checkbox"], input[type="radio"] { appearance: none; width: 10px; height: 10px; border: 1px solid #777; background: #fff; flex: none; }
input[type="checkbox"]:checked::before { content: ""; display: block; width: 3px; height: 5px; margin: 0 0 0 2px; border: solid #111; border-width: 0 2px 2px 0; transform: rotate(40deg); }
input[type="radio"] { border-radius: 50%; }
input[type="radio"]:checked { background: radial-gradient(#222 0 3px, #fff 3px); }
.field { display: flex; flex-direction: column; min-width: 0; }
.field input[type="text"] { background: #fff; }
textarea { resize: none; border: 1px solid #b0b0b0; background: #fff; display: block; }

/* schedule entry dialog */
.dialog { position: absolute; top: 48px; left: calc(50% - 220px); width: 440px; background: #85c8eb; border: 1px solid #6bb2d8; padding: 0 5px 5px 7px; }
.dlgtitle { height: 22px; display: flex; align-items: center; }
.dlgtitle h2 { flex: 1; text-align: center; font: 400 11px/21px "Open Sans", sans-serif; color: #333; padding-left: 38px; }
.dlgtitle .q { width: 20px; font: 700 11px/16px "Open Sans", sans-serif; color: #111; align-self: flex-start; }
.dlgtitle .dx { width: 34px; height: 15px; background: #c75050; align-self: flex-start; display: flex; align-items: center; justify-content: center; }
.dlgtitle .dx svg { width: 9px; height: 9px; }
.dlgbody { background: #a9c8f3; padding: 4px 4px 3px 3px; border: 1px solid #9db9dd; border-width: 1px 0 1px 0; }
.entered { height: 20px; border: 1px solid #fbc04e; background: linear-gradient(#ffe3a3, #ffe9bd 45%, #fcb02a); display: flex; gap: 57px; justify-content: flex-end; align-items: center; padding-right: 20px; color: #222; }
.cols { display: flex; gap: 5px; margin-top: 1px; }
.form { flex: 1; min-width: 0; display: flex; flex-direction: column; gap: 3px; }
.box { border: 1px solid #8fa8cc; background: linear-gradient(#a9c8f3, #d4e4fb 50%, #fff); padding: 2px 5px 1px; }
.patient { height: 127px; display: flex; flex-direction: column; padding-top: 4px; }
.case { height: 81px; margin-top: -3px; }
.two { display: grid; grid-template-columns: 163px 1fr; gap: 13px; }
.field input#pt { height: 13px; border: 1px solid #b5b5b5; margin-top: 2px; }
.two .b { line-height: 11px; }
.times { display: flex; gap: 4px; justify-content: flex-end; align-items: flex-end; }
.times .sel, .times .spin { height: 13px; margin-top: 2px; }
.tm { width: 37px; } .ap { width: 30px; } .du { width: 35px; }
.ap select { padding-left: 0; }
.du .b { align-self: flex-end; }
.details { display: flex; color: #222; white-space: nowrap; }
.details dl { width: 155px; display: grid; grid-template-columns: 48px 1fr; column-gap: 3px; line-height: 12px; grid-template-rows: 16px 14px 12px 10px; align-items: center; }
.details dt { text-align: right; font: 700 9px/12px Roboto, sans-serif; color: #111; }
.sex { width: 33px; line-height: 16px; }
.ph { width: 33px; font: 700 9px/16px Roboto, sans-serif; }
.phones { font: 700 9px/10px Roboto, sans-serif; padding-top: 3px; color: #111; }
.drs { display: grid; grid-template-columns: 155px 1fr; }
.drs b { font: 700 9px/13px Roboto, sans-serif; color: #111; }
.patient .two:last-child { margin-top: auto; }
.caserow { display: grid; grid-template-columns: 27px 133px 59px 1fr; gap: 3px 3px; align-items: center; }
.caserow .b { text-align: right; }
.officein { height: 14px; border: 1px solid #333; background: #a9c8f3; font: 700 9px/12px Roboto, sans-serif; padding-left: 1px; }
.noterow { display: grid; grid-template-columns: 1fr 36px; gap: 5px; }
.noterow textarea { height: 34px; margin-top: 2px; }
.confirm { border: 0; margin: 0; padding: 0; min-width: 0; }
.confirm legend { padding: 0; font: 700 9px/11px Roboto, sans-serif; color: #111; }
.confirm label { display: flex; align-items: center; gap: 2px; height: 15px; padding-left: 2px; }
.remind { height: 51px; }
.remtop { display: grid; grid-template-columns: 155px 1fr; font: 700 9px/10px Roboto, sans-serif; color: #10108c; padding-left: 1px; }
.remtop label { display: flex; align-items: center; gap: 2px; }
.remrow { display: flex; padding-top: 9px; padding-left: 1px; }
.by { width: 60px; margin-right: 15px; position: relative; }
.st { width: 55px; margin-right: 18px; } .at { width: 30px; margin-right: 26px; } .re { width: 41px; }
.link { color: #1414f0; }
.pop { position: absolute; left: 0; right: 0; top: 24px; z-index: 2; background: #fff; border: 1px solid #444; font-size: 9px; line-height: 11px; }
.pop li { padding-left: 1px; }
.pop .on { background: #3399ff; color: #fff; }
.ins { height: 69px; display: flex; justify-content: space-between; padding-top: 12px; }
.insleft { display: grid; grid-template-columns: 41px 142px; grid-template-rows: 14px 14px 14px; row-gap: 4px; column-gap: 2px; align-items: center; align-content: start; }
.insleft label { white-space: nowrap; }
.req { grid-column: 1; justify-self: end; display: flex; }
.med { width: 66px; margin-left: 14px; }
.insleft .dis { height: 14px; }
.insright { display: grid; grid-template-columns: 20px 109px; grid-template-rows: 14px 31px; row-gap: 4px; column-gap: 3px; align-content: start; margin-right: 5px; }
.pending { grid-column: 2; justify-self: end; width: 57px; border: 1px solid #333; text-align: center; font: 700 9px/12px Roboto, sans-serif; }
.insright textarea { height: 31px; width: 109px; }
.tablebox { height: 88px; background: #fff; padding: 0; display: flex; flex-direction: column; }
.tablebox table { border-collapse: collapse; table-layout: fixed; width: 100%; white-space: nowrap; }
.tablebox .c1 { width: 16px; } .c2 { width: 13px; } .c4 { width: 63px; } .c5 { width: 42px; } .c6 { width: 50px; } .c7 { width: 29px; }
.tablebox th { padding: 0 1px; height: 13px; text-align: left; font: 700 9px/12px Roboto, sans-serif; background: linear-gradient(#fff, #e6e3da); border-right: 1px solid #aaa; border-bottom: 1px solid #999; color: #111; }
.tablebox td { padding: 0 1px; height: 16px; }
.tablebox td.p { font: 700 9px/12px Roboto, sans-serif; text-align: center; }
.tablebox td input { display: block; }
.tablebox .r { text-align: right; padding-right: 3px; }
.links { margin-top: auto; display: flex; gap: 8px; padding-left: 7px; }
.links a { display: flex; align-items: center; gap: 1px; color: #1c4f9c; text-decoration: none; }
.links .ic { width: 12px; height: 12px; }
.hscroll { height: 13px; background: #f0f0f0; display: flex; align-items: center; margin-top: 1px; padding: 0 2px; gap: 2px; }
.hscroll svg { width: 9px; height: 9px; }
.track { flex: 1; height: 11px; display: flex; }
.track span { width: 65%; background: #cdcdcd; }
.actions { width: 75px; flex: none; margin-top: 2px; border: 1px solid #8fa8cc; background: linear-gradient(#a9c8f3, #fff 85%); display: flex; flex-direction: column; gap: 3px; padding: 1px 2px 3px 1px; }
.sp1 { flex: 16; } .sp2 { flex: 9; }
.actions button { height: 17px; border: 1px solid #b9bec6; background: linear-gradient(#f2f2f2, #dfdfdf); display: flex; align-items: center; font: 700 9px/12px Roboto, sans-serif; color: #111; padding: 0 3px 0 1px; }
.actions button span { flex: 1; text-align: center; }
.actions .ok { border: 2px solid #6aaef0; padding: 0 2px 0 0; }
.actions .dd { width: 8px; height: 6px; }
</style>
